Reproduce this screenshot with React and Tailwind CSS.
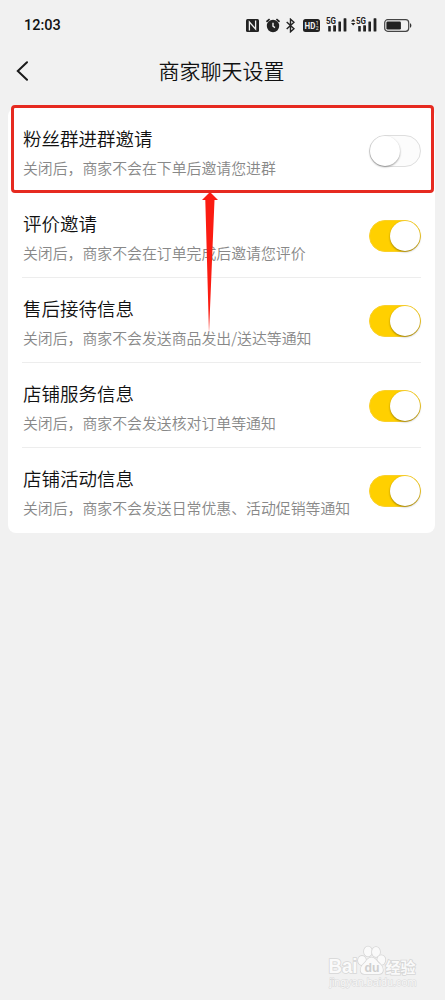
import React, { useState } from "react";

const settings = [
  { title: "粉丝群进群邀请", desc: "关闭后，商家不会在下单后邀请您进群", on: false },
  { title: "评价邀请", desc: "关闭后，商家不会在订单完成后邀请您评价", on: true },
  { title: "售后接待信息", desc: "关闭后，商家不会发送商品发出/送达等通知", on: true },
  { title: "店铺服务信息", desc: "关闭后，商家不会发送核对订单等通知", on: true },
  { title: "店铺活动信息", desc: "关闭后，商家不会发送日常优惠、活动促销等通知", on: true },
];

const Signal = ({ arrows }) => (
  <svg width="26" height="16" viewBox="0 0 26 16" fill="#222">
    {arrows && <path d="M2.2 2 4.4 4.5H0zM2.2 8.5 4.4 6H0z" />}
    <text x="5" y="7" fontSize="8.6" fontWeight="700" textLength="10" lengthAdjust="spacingAndGlyphs" fontFamily="Roboto, sans-serif">5G</text>
    <rect x="7.2" y="9" width="2.6" height="5.6" rx=".5" />
    <rect x="12.2" y="8.2" width="2.8" height="6.4" rx=".5" />
    <rect x="17.4" y="4.5" width="2.6" height="10.1" rx=".5" />
    <rect x="22.6" y="1.3" width="2.8" height="13.3" rx=".5" />
  </svg>
);

const StatusBar = () => (
  <div className="h-[50px] pl-6 pr-[33px] flex items-center justify-between text-[#111]">
    <span className="font-['Roboto',sans-serif] text-[14.5px] font-medium leading-none pt-[3px]">12:03</span>
    <div className="flex items-center">
      {/* NFC */}
      <svg className="mr-[7px]" width="13" height="13" viewBox="0 0 13 13">
        <rect width="13" height="13" rx="1.5" fill="#222" />
        <path d="M3.4 11.5V3L9.6 10V1.5" fill="none" stroke="#f1f1f1" strokeWidth="1.3" />
      </svg>
      {/* Alarm */}
      <svg className="mr-[6px]" width="14" height="15" viewBox="0 0 14 15">
        <circle cx="7" cy="8" r="6.2" fill="#222" />
        <path d="M.5 3.8 3.6 1.2M13.5 3.8 10.4 1.2" stroke="#222" strokeWidth="1.7" />
        <path d="M7 4.8V8.2L9 9.6" fill="none" stroke="#f1f1f1" strokeWidth="1.4" />
      </svg>
      {/* Bluetooth */}
      <svg className="mr-[8px]" width="9" height="15" viewBox="0 0 9 15" fill="none" stroke="#222" strokeWidth="1.4">
        <path d="M.7 4 8 10.7 4.5 13.8V1.2L8 4.3.7 11" />
      </svg>
      <svg className="mr-px" width="17" height="13" viewBox="0 0 17 13">
        <rect width="17" height="13" rx="2.5" fill="#222" />
        <text x="1.6" y="9.8" fontSize="9.2" fontWeight="700" textLength="10.8" lengthAdjust="spacingAndGlyphs" fill="#f1f1f1" fontFamily="Roboto, sans-serif">HD</text>
        <text x="12.7" y="6.2" fontSize="5" fill="#f1f1f1" fontFamily="Roboto, sans-serif">1</text>
        <text x="12.7" y="11" fontSize="5" fill="#f1f1f1" fontFamily="Roboto, sans-serif">2</text>
      </svg>
      <Signal />
      <div className="ml-[4px] mr-[7px]"><Signal arrows /></div>
      <svg width="28" height="13" viewBox="0 0 28 13">
        <rect x=".7" y=".7" width="24" height="11.6" rx="3" fill="none" stroke="#444" strokeWidth="1.2" />
        <rect x="2.4" y="2.4" width="14.5" height="8.2" rx="1.3" fill="#222" />
        <path d="M26 4.3c1.8.5 1.8 4 0 4.5z" fill="#333" />
      </svg>
    </div>
  </div>
);

const Toggle = ({ on, onClick }) => (
  <button
    onClick={onClick}
    className={`mt-[2px] w-[52px] h-8 rounded-full flex items-center shrink-0 border ${
      on ? "bg-[#ffd000] border-[#fad02b] justify-end" : "bg-[#fcfcfc] border-[#dedede] justify-start"
    }`}
  >
    <span className="w-[30px] h-[30px] rounded-full bg-white shadow-[0_1px_2px_rgba(0,0,0,0.4)]" />
  </button>
);

const Watermark = () => (
  <svg
    className="absolute left-[326px] top-[942px]"
    width="96"
    height="50"
    viewBox="0 0 96 50"
    fill="#fafafa"
    stroke="#d6d6d6"
    strokeWidth="1.6"
    paintOrder="stroke"
  >
    <text x="2.5" y="31" fontSize="19.5" fontWeight="700" textLength="29" lengthAdjust="spacingAndGlyphs" fontFamily="Liberation Sans, sans-serif">Bai</text>
    <ellipse cx="36" cy="18.5" rx="4" ry="4.6" />
    <ellipse cx="42" cy="9.5" rx="4" ry="5" />
    <ellipse cx="50" cy="10" rx="4" ry="5" />
    <ellipse cx="55.3" cy="18" rx="4" ry="4.8" />
    <path d="M45.5 15.5c-4 0-5 4-8 6.5-3.5 3-4.5 9.500 1 10h14.5c5.5-.5 4.5-7 1-10-3.5-2.5-4.5-6.500-8.500-6.500z" />
    <text x="38.5" y="30" fontSize="13.5" fontWeight="700" fill="#cfcfcf" stroke="none" textLength="15" lengthAdjust="spacingAndGlyphs" fontFamily="Liberation Sans, sans-serif">du</text>
    <text x="59.5" y="30.5" fontSize="15" fontWeight="700" textLength="30" fontFamily="Noto Sans CJK SC, sans-serif">经验</text>
    <text x="3.5" y="43.5" fontSize="10.5" strokeWidth="1" fill="#f8f8f8" stroke="#d9d9d9" textLength="87" lengthAdjust="spacingAndGlyphs" fontFamily="Liberation Sans, sans-serif">jingyan.baidu.com</text>
  </svg>
);

const App = () => {
  const [items, setItems] = useState(settings);

  const handleToggle = (index) => {
    setItems(items.map((item, i) => (i === index ? { ...item, on: !item.on } : item)));
  };

  return (
    <div className="relative w-[445px] h-[1000px] overflow-hidden bg-[#f1f1f1] font-['Noto_Sans_CJK_SC',sans-serif]">
      <StatusBar />

      {/* Header */}
      <header className="h-[58px] pb-[16px] flex items-center">
        <button className="w-10 pl-4">
          <svg width="13" height="20" viewBox="0 0 13 20" fill="none" stroke="#1a1a1a" strokeWidth="2" strokeLinecap="round">
            <path d="M11 1.3 1.8 10.1 11 18.8" />
          </svg>
        </button>
        <h1 className="flex-1 pr-[42px] pb-[2px] text-center text-[21px] leading-none font-[350] text-[#111] whitespace-nowrap">商家聊天设置</h1>
      </header>

      {/* Settings List */}
      <div className="ml-2 mr-[10px] rounded-lg bg-white">
        {items.map((item, index) => (
          <div key={item.title} className="px-[14px]">
            <div
              className={`h-[85px] flex items-center justify-between border-b ${
                index === items.length - 1 ? "border-transparent" : "border-[#ededed]"
              }`}
            >
              <div className="pl-px pt-[6px] whitespace-nowrap">
                <h2 className="text-[18.5px] leading-[28px] font-[350] text-[#111]">{item.title}</h2>
                <p className="mt-[2px] text-[14.88px] leading-[28px] font-[350] text-[#888]">{item.desc}</p>
              </div>
              <Toggle on={item.on} onClick={() => handleToggle(index)} />
            </div>
          </div>
        ))}
      </div>

      {/* Highlight */}
      <div className="absolute left-[11px] top-[105px] w-[423px] h-[88px] rounded-[4px] border-[3px] border-[#e62a20] pointer-events-none" />
      <svg className="absolute left-[200px] top-[191px] pointer-events-none" width="20" height="144" viewBox="0 0 20 144">
        <path d="M10 1 18 9H14.5L9 142 5.3 9H2z" fill="#fb1c12" />
      </svg>

      <Watermark />
    </div>
  );
};

export default App;
